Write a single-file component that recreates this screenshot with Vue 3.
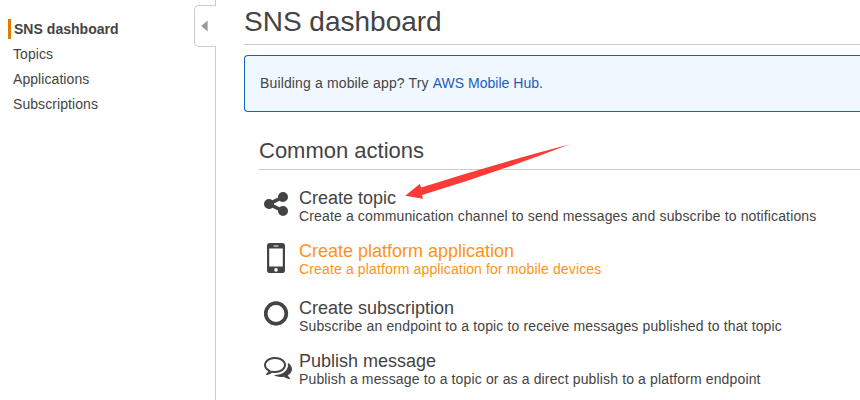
<script setup>
const nav = ['SNS dashboard', 'Topics', 'Applications', 'Subscriptions']

const actions = [
  { icon: 'share', title: 'Create topic', text: 'Create a communication channel to send messages and subscribe to notifications' },
  { icon: 'mobile', title: 'Create platform application', text: 'Create a platform application for mobile devices', active: true },
  { icon: 'circle', title: 'Create subscription', text: 'Subscribe an endpoint to a topic to receive messages published to that topic' },
  { icon: 'comments', title: 'Publish message', text: 'Publish a message to a topic or as a direct publish to a platform endpoint' },
]
</script>

<template>
  <div class="page">
    <aside class="sidebar">
      <nav class="nav">
        <a v-for="(item, i) in nav" :key="item" class="nav-item" :class="{ current: i === 0 }">{{ item }}</a>
      </nav>
      <button class="toggle" aria-label="Collapse">
        <svg width="7" height="12" viewBox="0 0 7 12"><path d="M0.3 6L6.6 0.4V11.6Z" fill="#999" /></svg>
      </button>
    </aside>

    <main class="main">
      <h1 class="title">SNS dashboard</h1>
      <div class="notice">Building a mobile app? Try <a class="link">AWS Mobile Hub</a>.</div>

      <section class="common">
        <h2 class="subtitle">Common actions</h2>
        <ul class="actions">
          <li v-for="a in actions" :key="a.icon" class="action" :class="[a.icon, { active: a.active }]">
            <svg class="icon" width="30" height="36" viewBox="0 0 30 36" fill="#444">
              <path v-if="a.icon === 'share'" transform="translate(0 1) scale(0.015625)" d="M1216 1024q133 0 226.5 93.5t93.5 226.5-93.5 226.5-226.5 93.5-226.5-93.5-93.5-226.5q0-12 2-34l-360-180q-92 86-218 86-133 0-226.5-93.5t-93.5-226.5 93.5-226.5 226.5-93.5q126 0 218 86l360-180q-2-22-2-34 0-133 93.5-226.5t226.5-93.5 226.5 93.5 93.5 226.5-93.5 226.5-226.5 93.5q-126 0-218-86l-360 180q2 22 2 34t-2 34l360 180q92-86 218-86z" />
              <path v-else-if="a.icon === 'mobile'" fill-rule="evenodd" d="M5.8 1H18.2Q21 1 21 3.8V28.2Q21 31 18.2 31H5.8Q3 31 3 28.2V3.8Q3 1 5.8 1ZM5.2 6.6V24.6H18.8V6.6ZM9.6 3.4V4.4H14.4V3.4ZM12 26.1A1.8 1.8 0 1 0 12 29.7A1.8 1.8 0 1 0 12 26.1Z" />
              <circle v-else-if="a.icon === 'circle'" cx="12" cy="14.5" r="10.3" fill="none" stroke="#444" stroke-width="3.7" />
              <path v-else transform="translate(0 1) scale(0.015625)" d="M704 384q-153 0-286 52t-211.5 141-78.5 191q0 82 53 158t149 132l97 56-35 84q34-20 62-39l44-31 53 10q78 14 153 14 153 0 286-52t211.5-141 78.5-191-78.5-191-211.5-141-286-52zm0-128q191 0 353.5 68.5t256.5 186.5 94 257-94 257-256.5 186.5-353.5 68.5q-86 0-176-16-124 88-278 128-36 9-86 16h-3q-11 0-20.5-8t-11.5-21q-1-3-1-6.5t.5-6.5 2-6l2.5-5 3.5-5.5 4-5 4.5-5 4-4.5q5-6 23-25t26-29.5 22.5-29 25-38.5 20.5-44q-124-72-195-177t-71-224q0-139 94-257t256.5-186.5 353.5-68.5zm822 1169q10 24 20.5 44t25 38.5 22.5 29 26 29.5 23 25q1 1 4 4.5t4.5 5 4 5 3.5 5.5l2.5 5 2 6 .5 6.5-1 6.5q-3 14-13 22t-22 7q-50-7-86-16-154-40-278-128-90 16-176 16-271 0-472-132 58 4 88 4 161 0 309-45t264-129q125-92 192-212t67-254q0-77-23-152 129 71 204 178t75 230q0 120-71 224.5t-195 176.5z" />
            </svg>
            <div>
              <div class="action-title">{{ a.title }}</div>
              <div class="action-text">{{ a.text }}</div>
            </div>
          </li>
        </ul>
      </section>
    </main>

    <svg class="arrow" width="168" height="58" viewBox="404 142 168 58">
      <path d="M405.2 195.8L419.6 184L421.2 187.4Q495 164 569.8 144.2Q495 173 422 195L423 198.8Z" fill="#fc3a36" />
    </svg>
  </div>
</template>

<style>
body {
  margin: 0;
  background: #fff;
}
</style>

<style scoped>
.page {
  position: relative;
  display: flex;
  width: 860px;
  height: 400px;
  overflow: hidden;
  color: #444;
  font-family: "Liberation Sans", Arial, sans-serif;
  font-size: 14px;
}
.sidebar {
  position: relative;
  box-sizing: border-box;
  flex: 0 0 216px;
  border-right: 1px solid #ccc;
}
.nav {
  display: flex;
  flex-direction: column;
  gap: 5px;
  padding: 19px 0 0 8px;
  letter-spacing: 0.07px;
}
.nav-item {
  padding-left: 5px;
  line-height: 20px;
}
.current {
  padding-left: 3px;
  border-left: 3px solid #e17b00;
  font-weight: bold;
  letter-spacing: 0.03px;
}
.toggle {
  position: absolute;
  top: 5px;
  right: -1px;
  display: flex;
  align-items: center;
  box-sizing: border-box;
  width: 22px;
  height: 42px;
  padding: 0 0 0 6px;
  border: 1px solid #ccc;
  border-right-color: #fff;
  border-radius: 5px 3px 3px 5px;
  background: #fff;
}
.main {
  flex: 1;
  min-width: 0;
  padding: 4px 0 0 28px;
}
.title {
  height: 40px;
  margin: 0 0 10px;
  border-bottom: 1px solid #ccc;
  font-size: 28px;
  font-weight: normal;
  line-height: 36px;
}
.notice {
  box-sizing: border-box;
  height: 57px;
  padding-left: 15px;
  border: 1px solid #1166bb;
  border-right: 0;
  border-radius: 4px 0 0 4px;
  background: #f0f8ff;
  letter-spacing: 0.14px;
  line-height: 55px;
}
.link {
  color: #1b5dbe;
  letter-spacing: 0.02px;
}
.common {
  padding: 25px 0 0 15px;
}
.subtitle {
  height: 32px;
  margin: 0;
  border-bottom: 1px solid #ccc;
  font-size: 22px;
  font-weight: normal;
  line-height: 28px;
}
.actions {
  display: flex;
  flex-direction: column;
  gap: 17px;
  margin: 0;
  padding: 19px 0 0 5px;
  list-style: none;
}
.action {
  display: flex;
  gap: 5px;
  height: 36px;
  line-height: 18px;
  white-space: nowrap;
}
.action.mobile {
  margin-bottom: 4px;
}
.icon {
  flex: none;
}
.action-title {
  font-size: 18px;
}
.action-text {
  letter-spacing: 0.138px;
}
.active {
  color: #ff9314;
}
.arrow {
  position: absolute;
  left: 404px;
  top: 142px;
}
</style>
